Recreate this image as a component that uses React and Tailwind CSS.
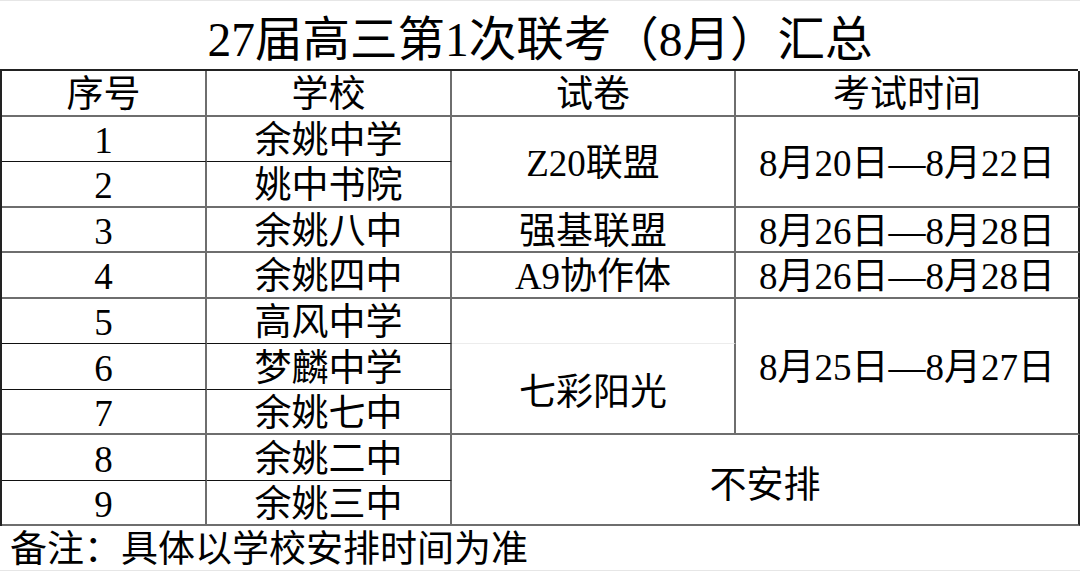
const font = "font-['Liberation_Serif','Noto_Sans_CJK_SC',serif]";

// line styles seen in the sheet
const GRAY = 'border-b-2 border-b-[#6e6e6e]';
const BLACK = 'border-b border-b-[#111]';
const FAINT = 'border-b border-b-[#ececec]';

const Cell = ({ children, bottom = GRAY, last = false, className = '' }) => (
  <div
    className={`flex items-center justify-center border-r-2 pt-1 ${
      last ? 'border-r-[#222]' : 'border-r-[#6e6e6e]'
    } ${bottom} text-[37px] leading-none ${className}`}
  >
    {children}
  </div>
);

const App = () => {
  return (
    <div className={`h-[571px] w-[1080px] overflow-hidden border-y border-[#e6e6e6] bg-white text-black ${font}`}>
      <div className="flex h-[68px] items-center justify-center pt-3 text-[47.5px] leading-none">
        27届高三第1次联考（8月）汇总
      </div>

      <div className="grid w-[1078px] auto-rows-[45.5px] grid-cols-[205px_245px_284px_344px] border-t-2 border-l-2 border-[#222]">
        {/* header */}
        <Cell>序号</Cell>
        <Cell>学校</Cell>
        <Cell>试卷</Cell>
        <Cell last>考试时间</Cell>

        {/* 1-2 */}
        <Cell bottom={BLACK}>1</Cell>
        <Cell bottom={BLACK}>余姚中学</Cell>
        <Cell className="row-span-2">Z20联盟</Cell>
        <Cell last className="row-span-2">8月20日—8月22日</Cell>
        <Cell>2</Cell>
        <Cell>姚中书院</Cell>

        {/* 3 */}
        <Cell>3</Cell>
        <Cell>余姚八中</Cell>
        <Cell>强基联盟</Cell>
        <Cell last>8月26日—8月28日</Cell>

        {/* 4 */}
        <Cell>4</Cell>
        <Cell>余姚四中</Cell>
        <Cell>A9协作体</Cell>
        <Cell last>8月26日—8月28日</Cell>

        {/* 5-7 */}
        <Cell bottom={BLACK}>5</Cell>
        <Cell bottom={BLACK}>高风中学</Cell>
        <Cell bottom={FAINT}></Cell>
        <Cell last className="row-span-3">8月25日—8月27日</Cell>
        <Cell bottom={BLACK}>6</Cell>
        <Cell bottom={BLACK}>梦麟中学</Cell>
        <Cell className="row-span-2 pt-2">七彩阳光</Cell>
        <Cell>7</Cell>
        <Cell>余姚七中</Cell>

        {/* 8-9 */}
        <Cell bottom={BLACK}>8</Cell>
        <Cell bottom={BLACK}>余姚二中</Cell>
        <Cell last className="col-span-2 row-span-2 pt-3">不安排</Cell>
        <Cell>9</Cell>
        <Cell>余姚三中</Cell>
      </div>

      <div className="flex h-[46px] items-center pl-[10px] text-[37px] leading-none">
        备注：具体以学校安排时间为准
      </div>
    </div>
  );
};

export default App;
